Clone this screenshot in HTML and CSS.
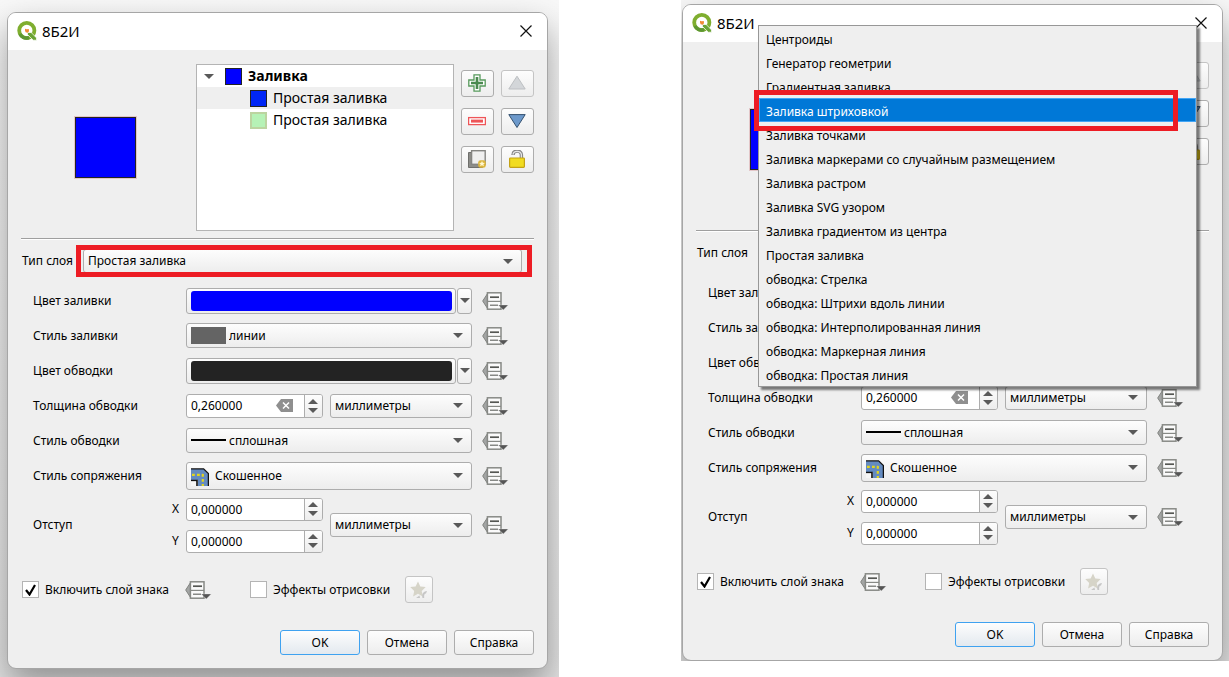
FILE: index.html
```html
<!DOCTYPE html>
<html lang="ru">
<head>
<meta charset="utf-8">
<meta name="viewport" content="width=device-width, initial-scale=1">
<title>8Б2И</title>
<link rel="stylesheet" href="styles.css">
</head>
<body>
<svg class="symbols" aria-hidden="true">
  <symbol id="i-logo" viewBox="0 0 20 20">
    <circle cx="9.8" cy="9.5" r="7.6" fill="none" stroke="#7fae2f" stroke-width="3.8"/>
    <path d="M3 13a7.6 7.6 0 0 0 9 3.700" fill="none" stroke="#5d9732" stroke-width="3.6"/>
    <path d="M10.500 11.500h3.700l5.300 5.400v2.300h-3.200l-5.800-5.600z" fill="#6aa334" stroke="#fff" stroke-width=".7"/>
    <path d="M8 7.800l1.800.5 2-.3.200 2.200-1.200 1.500-2.200-.5-.6-1.700z" fill="#f08a35"/>
  </symbol>
  <symbol id="i-close" viewBox="0 0 12 12"><path d="M.5.5l11 11M11.5.5l-11 11" stroke="#111" stroke-width="1.2" fill="none"/></symbol>
  <symbol id="i-plus" viewBox="0 0 18 18">
    <path d="M6 .8h6v5.200h5.200v6h-5.200v5.200h-6v-5.200H.8v-6h5.200z" fill="#fff" stroke="#579a5c" stroke-width="1.3"/>
    <path d="M9 3v12M3 9h12" stroke="#4b8a50" stroke-width="2.600"/>
  </symbol>
  <symbol id="i-minus" viewBox="0 0 18 18">
    <rect x=".6" y="5.6" width="16.8" height="7" fill="#fff" stroke="#ee5558" stroke-width="1.3"/>
    <path d="M3 9.1h12" stroke="#ee5558" stroke-width="3"/>
  </symbol>
  <symbol id="i-up" viewBox="0 0 18 18"><path d="M9 2.2L17.2 15H.8z" fill="#d3d6d9" stroke="#bcbfc2"/></symbol>
  <symbol id="i-down" viewBox="0 0 18 18"><path d="M9 15.5L17.2 2.6H.8z" fill="#6d99cb" stroke="#34516f"/></symbol>
  <symbol id="i-copy" viewBox="0 0 18 18">
    <path d="M.5 2.5h3v12h11v3H.5z" fill="#8d8d89" stroke="#6f6f6c"/>
    <rect x="3.6" y=".7" width="13.6" height="13.6" fill="#efefef" stroke="#858582" stroke-width="1.4"/>
    <rect x="10.2" y="10.2" width="7.6" height="7.6" rx="2.4" fill="#dcb53c"/>
    <path d="M14 11l.9 1.8 2 .2-1.5 1.3.5 2-1.9-1-1.9 1 .5-2-1.5-1.3 2-.2z" fill="#fff7d0"/>
  </symbol>
  <symbol id="i-lock" viewBox="0 0 18 18">
    <path d="M5 5C5.200-.2 13-.2 13.400 4.600V9" fill="none" stroke="#858585" stroke-width="3.400"/>
    <path d="M5 4.600C5.400.2 12.800.2 13.400 4.600V9" fill="none" stroke="#e6e6e6" stroke-width="1.3"/>
    <rect x="1.6" y="8" width="14.8" height="9.400" rx=".8" fill="#f1dc20" stroke="#c4a216" stroke-width="1.2"/>
  </symbol>
  <symbol id="i-override" viewBox="0 0 27 20">
    <path d="M5.5 2.6v14.8L.7 10z" fill="#a3a5a4" stroke="#80827f"/>
    <rect x="5.4" y="1.8" width="13.6" height="16.4" fill="#fafafa" stroke="#878985" stroke-width="1.5"/>
    <path d="M6 10.4h13" stroke="#878985" stroke-width="1.2"/>
    <path d="M8 6.2h9" stroke="#555753" stroke-width="1.7"/>
    <path d="M8 14.2h8" stroke="#6b6d69" stroke-width="1.2"/>
    <path d="M16.400 14h9.800l-4.900 5z" fill="#555" stroke="#efefef" stroke-width=".3"/>
  </symbol>
  <symbol id="i-clear" viewBox="0 0 17 13">
    <path d="M5 0h12v13H5L0 6.5z" fill="#8f8f8f"/>
    <path d="M7 3.5l6 6M13 3.5l-6 6" stroke="#fff" stroke-width="1.5"/>
  </symbol>
  <symbol id="i-tri-down" viewBox="0 0 10 5"><path d="M0 0h10L5 5z" fill="#595959"/></symbol>
  <symbol id="i-tri-up" viewBox="0 0 10 5"><path d="M0 5h10L5 0z" fill="#595959"/></symbol>
  <symbol id="i-bevel" viewBox="0 0 18 18">
    <path d="M0 1h12.500L17.500 6v12H7V12H0z" fill="#648bc0"/>
    <path d="M0 .8h12.600L17.400 5.600V18" fill="none" stroke="#111" stroke-width="1.3"/>
    <path d="M0 12.500h6V18" fill="none" stroke="#111" stroke-width="1.6"/>
    <path d="M0 13.500h5V18H0z" fill="#f6f6f6"/>
    <path d="M1 6.800h11M11.800 6v12" fill="none" stroke="#e2d51e" stroke-width="2.2" stroke-dasharray="2.800 2.200"/>
  </symbol>
  <symbol id="i-star" viewBox="0 0 18 18">
    <path d="M8 .5l2.300 5 5.400.6-4 3.800 1.100 5.600L8 12.800l-4.900 2.700 1.100-5.600-4-3.800 5.400-.6z" fill="#d6d4c8"/>
    <path d="M6 17l3.500-2.500L10 17zM12.500 17c-1-4 .5-6.500 4.500-7l-1 2.500c-1.800 0-2 2-1.800 4.500z" fill="#c6c6c6"/>
  </symbol>
</svg>

<main class="page">
  <section class="shot">
    <div class="dialog" data-key="a"></div>
  </section>
  <section class="shot shot--cropped">
    <div class="dialog dialog--open" data-key="b">
      <div class="menu" role="listbox" aria-label="Тип слоя">
        <button class="menu__item" role="option">Центроиды</button>
        <button class="menu__item" role="option">Генератор геометрии</button>
        <button class="menu__item" role="option">Градиентная заливка</button>
        <button class="menu__item menu__item--active" role="option" aria-selected="true">Заливка штриховкой</button>
        <button class="menu__item" role="option">Заливка точками</button>
        <button class="menu__item" role="option">Заливка маркерами со случайным размещением</button>
        <button class="menu__item" role="option">Заливка растром</button>
        <button class="menu__item" role="option">Заливка SVG узором</button>
        <button class="menu__item" role="option">Заливка градиентом из центра</button>
        <button class="menu__item" role="option">Простая заливка</button>
        <button class="menu__item" role="option">обводка: Стрелка</button>
        <button class="menu__item" role="option">обводка: Штрихи вдоль линии</button>
        <button class="menu__item" role="option">обводка: Интерполированная линия</button>
        <button class="menu__item" role="option">обводка: Маркерная линия</button>
        <button class="menu__item" role="option">обводка: Простая линия</button>
        <span class="mark mark--menu"></span>
      </div>
    </div>
  </section>
</main>

<template id="dialog-content">
  <header class="titlebar">
    <svg class="titlebar__logo"><use href="#i-logo"/></svg>
    <h1 class="titlebar__text">8Б2И</h1>
    <button class="titlebar__close" aria-label="Закрыть"><svg><use href="#i-close"/></svg></button>
  </header>
  <div class="body">
    <div class="symbol">
      <div class="symbol__preview"><span class="preview"></span></div>
      <ul class="tree">
        <li class="tree__row tree__row--root"><svg class="tri"><use href="#i-tri-down"/></svg><span class="swatch swatch--blue"></span>Заливка</li>
        <li class="tree__row tree__row--selected"><span class="swatch swatch--azure"></span>Простая заливка</li>
        <li class="tree__row"><span class="swatch swatch--green"></span>Простая заливка</li>
      </ul>
      <div class="tools">
        <button class="btn tool" aria-label="Добавить"><svg><use href="#i-plus"/></svg></button>
        <button class="btn tool" aria-label="Вверх" disabled><svg><use href="#i-up"/></svg></button>
        <button class="btn tool" aria-label="Удалить"><svg><use href="#i-minus"/></svg></button>
        <button class="btn tool" aria-label="Вниз"><svg><use href="#i-down"/></svg></button>
        <button class="btn tool" aria-label="Дублировать"><svg><use href="#i-copy"/></svg></button>
        <button class="btn tool" aria-label="Закрепить"><svg><use href="#i-lock"/></svg></button>
      </div>
    </div>
    <hr class="rule">
    <div class="type">
      <label class="type__label" for="type">Тип слоя</label>
      <span class="type__field"><select class="btn combo" id="type"><option>Простая заливка</option></select><span class="mark mark--type"></span></span>
    </div>
    <div class="form">
      <label for="fill">Цвет заливки</label>
      <span class="color">
        <button class="btn color__button" id="fill"><span class="color__fill color__fill--blue"></span></button>
        <button class="btn color__drop" aria-label="Меню цвета заливки"><svg class="tri"><use href="#i-tri-down"/></svg></button>
      </span>
      <button class="override" aria-label="Переопределить"><svg><use href="#i-override"/></svg></button>

      <label for="fill-style">Стиль заливки</label>
      <span class="picked"><select class="btn combo combo--wide" id="fill-style"><option>линии</option></select><span class="picked__icon pattern"></span></span>
      <button class="override" aria-label="Переопределить"><svg><use href="#i-override"/></svg></button>

      <label for="stroke">Цвет обводки</label>
      <span class="color">
        <button class="btn color__button" id="stroke"><span class="color__fill color__fill--dark"></span></button>
        <button class="btn color__drop" aria-label="Меню цвета обводки"><svg class="tri"><use href="#i-tri-down"/></svg></button>
      </span>
      <button class="override" aria-label="Переопределить"><svg><use href="#i-override"/></svg></button>

      <label for="width">Толщина обводки</label>
      <span class="pair">
        <span class="spin">
          <input class="spin__input" id="width" value="0,260000">
          <button class="spin__clear" aria-label="Очистить"><svg><use href="#i-clear"/></svg></button>
          <span class="spin__steps"><button aria-label="Больше"><svg class="tri"><use href="#i-tri-up"/></svg></button><button aria-label="Меньше"><svg class="tri"><use href="#i-tri-down"/></svg></button></span>
        </span>
        <select class="btn combo" aria-label="Единицы толщины"><option>миллиметры</option></select>
      </span>
      <button class="override" aria-label="Переопределить"><svg><use href="#i-override"/></svg></button>

      <label for="stroke-style">Стиль обводки</label>
      <span class="picked"><select class="btn combo combo--wide" id="stroke-style"><option>сплошная</option></select><span class="picked__icon line"></span></span>
      <button class="override" aria-label="Переопределить"><svg><use href="#i-override"/></svg></button>

      <label for="join">Стиль сопряжения</label>
      <span class="picked"><select class="btn combo combo--join" id="join"><option>Скошенное</option></select><svg class="picked__icon join"><use href="#i-bevel"/></svg></span>
      <button class="override" aria-label="Переопределить"><svg><use href="#i-override"/></svg></button>

      <div class="offset-label"><span>Отступ</span><span class="axes"><label for="x">X</label><label for="y">Y</label></span></div>
      <span class="pair pair--offset">
        <span class="stack">
          <span class="spin">
            <input class="spin__input" id="x" value="0,000000">
            <span class="spin__steps"><button aria-label="Больше"><svg class="tri"><use href="#i-tri-up"/></svg></button><button aria-label="Меньше"><svg class="tri"><use href="#i-tri-down"/></svg></button></span>
          </span>
          <span class="spin">
            <input class="spin__input" id="y" value="0,000000">
            <span class="spin__steps"><button aria-label="Больше"><svg class="tri"><use href="#i-tri-up"/></svg></button><button aria-label="Меньше"><svg class="tri"><use href="#i-tri-down"/></svg></button></span>
          </span>
        </span>
        <select class="btn combo" aria-label="Единицы отступа"><option>миллиметры</option></select>
      </span>
      <button class="override" aria-label="Переопределить"><svg><use href="#i-override"/></svg></button>
    </div>
    <div class="options">
      <label class="check"><input type="checkbox" checked>Включить слой знака</label>
      <button class="override" aria-label="Переопределить"><svg><use href="#i-override"/></svg></button>
      <label class="check check--effects"><input type="checkbox">Эффекты отрисовки</label>
      <button class="btn star" aria-label="Настроить эффекты" disabled><svg><use href="#i-star"/></svg></button>
    </div>
    <footer class="actions">
      <button class="btn action action--default">OK</button>
      <button class="btn action">Отмена</button>
      <button class="btn action">Справка</button>
    </footer>
  </div>
</template>
<script src="dialog.js"></script>
</body>
</html>
```

FILE: dialog.js
```js
// Fills every dialog from the shared template, keeping ids unique per dialog.
const template = document.getElementById('dialog-content');
document.querySelectorAll('.dialog').forEach((dialog) => {
  const key = dialog.dataset.key;
  const content = template.content.cloneNode(true);
  content.querySelectorAll('[id]').forEach((el) => { el.id = `${key}-${el.id}`; });
  content.querySelectorAll('label[for]').forEach((el) => { el.htmlFor = `${key}-${el.htmlFor}`; });
  dialog.prepend(content);
});
```

FILE: styles.css
```css
* { box-sizing: border-box; }

body {
  margin: 0;
  background: #fff;
  color: #000;
  font: 12px/16px "Noto Sans", "Open Sans", sans-serif;
}

button, input, select { font: inherit; color: inherit; margin: 0; }
button { padding: 0; border: 0; background: none; }
svg { display: block; }
.symbols { position: absolute; width: 0; height: 0; }

.page {
  display: grid;
  grid-template-columns: 559fr 548fr;
  column-gap: 122px;
  align-items: start;
}

.shot {
  overflow: hidden;
  padding: 12px 11px 8px 7px;
  background: linear-gradient(#f8f8f8, #e4e4e4);
}
.shot--cropped { padding: 4px 6px 0 1px; }

.dialog {
  position: relative;
  border: 1px solid #a6a6a6;
  border-radius: 9px;
  background: #efefef;
  box-shadow: 0 16px 34px rgba(0, 0, 0, .36);
}

.titlebar {
  display: flex;
  align-items: center;
  height: 37px;
  padding: 0 15px 2px 9px;
  border-radius: 8px 8px 0 0;
  background: #fff;
}
.titlebar__logo { width: 20px; height: 20px; }
.titlebar__text { margin: 0 auto 0 5px; font-size: 15px; line-height: 20px; font-weight: 400; }
.titlebar__close svg { width: 12px; height: 12px; }

.body { padding: 14px 13px 13px; }

.btn {
  border: 1px solid #adadad;
  border-radius: 3px;
  background: linear-gradient(#fdfdfd, #ededed);
}
.tri { width: 10px; height: 5px; }

.symbol {
  display: grid;
  grid-template-columns: 175fr 265fr 73px;
  min-height: 167px;
}
.symbol__preview { display: grid; place-items: center; padding-right: 6px; }
.preview {
  width: 61px;
  height: 61px;
  border: 1px solid #232323;
  background: #00f;
  box-shadow: 0 0 0 1px #e3c6c8;
}
.tree {
  margin: 0 7px 0 0;
  padding: 0;
  border: 1px solid #b4b4b4;
  background: #fff;
  list-style: none;
  font-size: 14px;
  line-height: 22px;
}
.tree__row { display: flex; align-items: center; gap: 6px; height: 22px; padding-left: 53px; }
.tree__row--root { padding-left: 7px; font-weight: 700; }
.tree__row--root .swatch { margin-left: 5px; }
.tree__row--selected { background: #efefef; }
.swatch { width: 17px; height: 17px; border: 1px solid #232323; }
.swatch--blue { background: #00f; }
.swatch--azure { background: #0026f5; }
.swatch--green { border: 2px solid #bcd4a0; background: #b6f2b6; }

.tools {
  display: grid;
  grid-template-columns: 1fr 1fr;
  gap: 11px 7px;
  align-content: start;
  padding-top: 6px;
}
.tool { display: grid; place-items: center; height: 27px; padding: 0 1px 1px 0; }
.tool svg { width: 18px; height: 18px; }
.tool:disabled, .star:disabled { border-color: #c4c4c4; }

.rule { margin: 7px 0 0; border: 0; border-top: 1px solid #9f9f9f; border-bottom: 1px solid #fff; }

.type { display: flex; align-items: center; margin: 9px 0 10px; padding-left: 1px; }
.type__label { flex: 0 0 61px; }
.type__field { position: relative; flex: 1; margin-right: 12px; }
.mark { position: absolute; border: 5px solid #ed1c24; pointer-events: none; }
.mark--type { inset: -4px -10px -4px -7px; }
.dialog--open .mark--type { display: none; }

.combo {
  appearance: none;
  display: block;
  width: 100%;
  height: 24px;
  padding: 0 24px 0 4px;
  background:
    url("data:image/svg+xml,%3Csvg xmlns='http://www.w3.org/2000/svg' width='10' height='5'%3E%3Cpath d='M0 0h10L5 5z' fill='%23595959'/%3E%3C/svg%3E") no-repeat right 8px center,
    linear-gradient(#fdfdfd, #ededed);
}
.combo--wide { height: 25px; padding-left: 42px; }
.combo--join { height: 28px; padding-left: 28px; }

.form {
  display: grid;
  grid-template-columns: 153fr 286fr 37px;
  grid-template-rows: repeat(6, 35px) 64px;
  align-items: center;
  padding: 0 25px 0 12px;
}
.override { width: 27px; }
.override svg { width: 27px; height: 20px; }
.form .override { margin-left: 10px; }

.color { display: flex; gap: 1px; }
.color__button { flex: 1; height: 26px; padding: 2px 3px 2px 4px; }
.color__fill { display: block; height: 20px; border-radius: 3px; }
.color__fill--blue { background: #00f; }
.color__fill--dark { background: #232323; }
.color__drop { display: grid; place-items: center; width: 15px; height: 26px; }

.picked { position: relative; }
.picked__icon { position: absolute; left: 5px; pointer-events: none; }
.pattern { top: 4px; width: 35px; height: 17px; background: #646464; }
.line { top: 11px; width: 35px; height: 2px; background: #000; }
.join { top: 6px; width: 18px; height: 18px; }

.pair { display: grid; grid-template-columns: 137fr 142fr; gap: 7px; align-items: center; }
.stack { display: grid; gap: 9px; }
.spin {
  display: flex;
  align-items: center;
  height: 24px;
  border: 1px solid #adadad;
  border-radius: 3px;
  background: #fff;
  overflow: hidden;
}
.stack .spin { height: 23px; }
.spin__input { flex: 1; min-width: 0; height: 100%; padding: 0 4px; border: 0; background: none; }
.spin__clear { margin-right: 11px; }
.spin__clear svg { width: 17px; height: 13px; }
.spin__steps {
  display: grid;
  align-content: center;
  gap: 4px;
  width: 18px;
  height: 100%;
  padding-right: 1px;
  border-left: 1px solid #adadad;
  background: linear-gradient(#fdfdfd, #ededed);
}
.spin__steps button { display: grid; place-items: center; }

.offset-label { display: flex; justify-content: space-between; align-items: center; }
.axes { display: grid; gap: 16px; padding-right: 7px; }

.options { display: grid; grid-template-columns: 164fr 27px 37fr 156fr 129fr; align-items: center; margin-top: 19px; }
.check { display: flex; align-items: center; gap: 6px; padding-left: 1px; white-space: nowrap; }
.check--effects { grid-column: 4; }
.check input {
  appearance: none;
  width: 17px;
  height: 17px;
  margin: 0;
  border: 1px solid #b4b4b4;
  background: #fff;
}
.check input:checked {
  background: #fff url("data:image/svg+xml,%3Csvg xmlns='http://www.w3.org/2000/svg' width='11' height='12'%3E%3Cpath d='M1 6l3.500 4.500L10 1' fill='none' stroke='%23000' stroke-width='2.200'/%3E%3C/svg%3E") no-repeat center;
}
.star { display: grid; place-items: center; width: 28px; height: 27px; }
.star svg { width: 18px; height: 18px; }

.actions { display: flex; justify-content: flex-end; gap: 7px; margin-top: 27px; }
.action { width: 80px; height: 25px; }
.action--default { border-color: #3fa2f0; background: linear-gradient(#fdfdfd, #e3e9ef); }

.menu {
  position: absolute;
  top: 20px;
  left: 75px;
  right: 25px;
  border: 1px solid #979797;
  background: #efefef;
  box-shadow: 3px 3px 2px rgba(0, 0, 0, .5);
}
.menu__item {
  display: block;
  width: 100%;
  height: 24px;
  padding: 3px 7px 0 6px;
  border: 1px solid transparent;
  text-align: left;
}
.menu__item--active { border-color: #42a5f5; background: #0078d7; color: #fff; }
.mark--menu { top: 64px; left: -5px; right: 18px; height: 41px; }
```
